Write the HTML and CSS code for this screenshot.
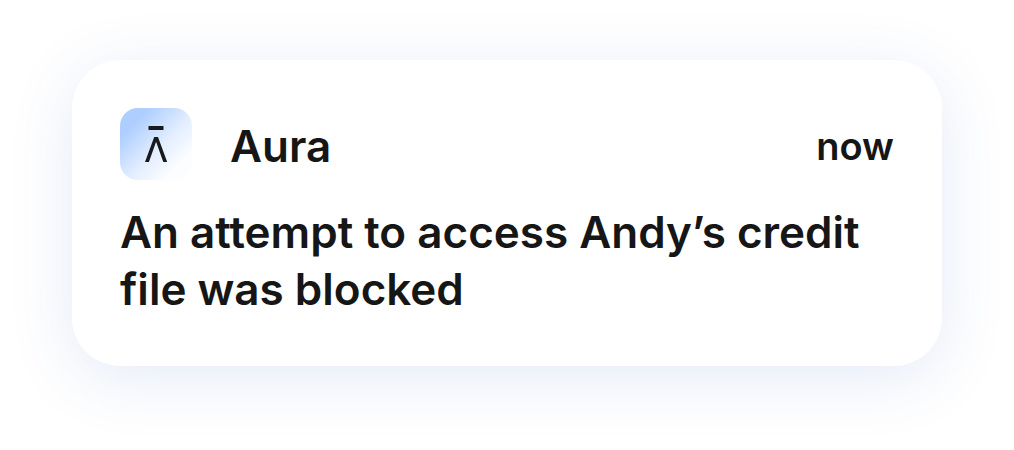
FILE: index.html
```html
<!DOCTYPE html>
<html lang="en">
<head>
<meta charset="utf-8">
<meta name="viewport" content="width=device-width, initial-scale=1">
<title>Aura notification</title>
<link rel="stylesheet" href="styles.css">
</head>
<body>
<article class="notification">
  <header class="header">
    <svg class="logo" viewBox="0 0 72 72" aria-hidden="true">
      <path d="M28.500 18h15v4h-15zM34.200 29h3.800L47.200 54h-3.900L36.100 33.800L28.900 54H25z" />
    </svg>
    <h1 class="name">Aura</h1>
    <time class="time">now</time>
  </header>
  <p class="message">An attempt to access Andy’s credit file was blocked</p>
</article>
</body>
</html>
```
FILE: styles.css
```css
* {
  box-sizing: border-box;
}

body {
  margin: 0;
  padding: 60px 72px 84px;
  background: #fff;
  color: #161616;
  font-family: Inter, "Liberation Sans", sans-serif;
}

.notification {
  padding: 48px;
  border-radius: 48px;
  background: #fff;
  box-shadow: 0 12px 64px rgba(50, 90, 190, 0.13);
}

.header {
  display: flex;
  align-items: center;
}

.logo {
  width: 72px;
  height: 72px;
  border-radius: 18px;
  background: linear-gradient(135deg, #adceff 20%, #e2edff 54%, #fbfdff 80%);
  fill: #161a1c;
}

.name {
  margin: 4px 0 0 38px;
  font-size: 44px;
  font-weight: 600;
  line-height: 56px;
}

.time {
  margin: 4px 0 0 auto;
  font-size: 38px;
  font-weight: 600;
  line-height: 48px;
}

.message {
  margin: 24px 0 0;
  font-size: 44px;
  font-weight: 600;
  line-height: 57px;
}
```
